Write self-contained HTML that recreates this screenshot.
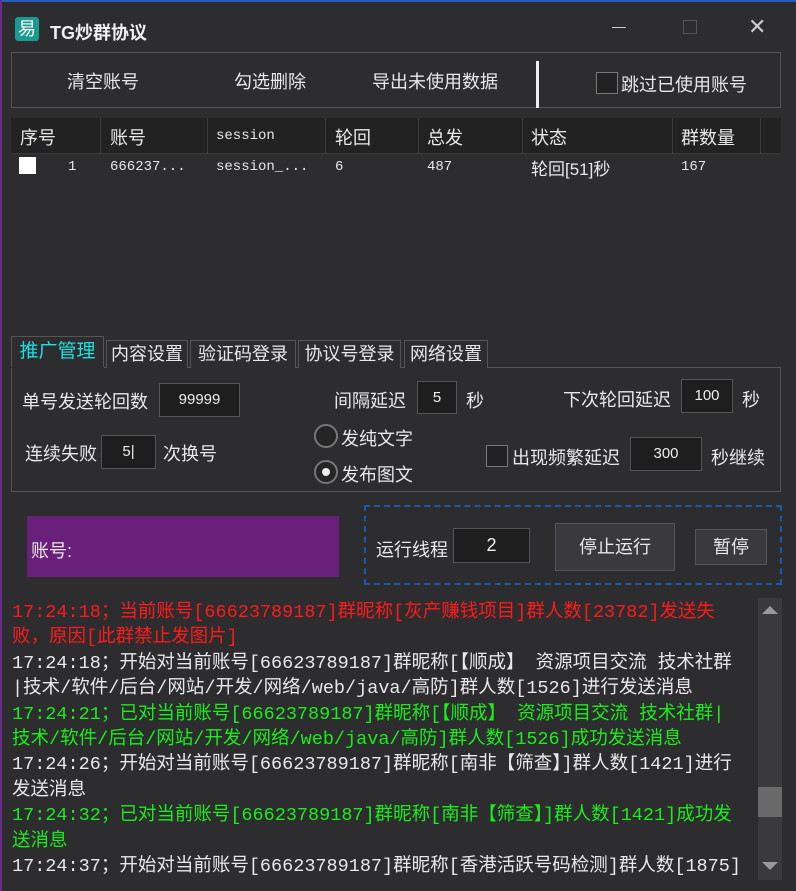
<!DOCTYPE html>
<html><head><meta charset="utf-8">
<style>
*{box-sizing:border-box;margin:0;padding:0}
body{width:796px;height:891px;background:#2d2d30;position:relative;overflow:hidden;font-family:"Liberation Sans","Noto Sans CJK SC",sans-serif;color:#e8e8e8}
.abs{position:absolute}
.frameT{left:0;top:0;width:796px;height:2px;background:#2a5ac8}
.frameL{left:0;top:0;width:2px;height:891px;background:#6a2a8a}
.title{left:50px;top:19px;font-size:18px;font-weight:bold;color:#f0f0f0}
.logo{left:15px;top:17px;width:24px;height:24px;background:#1a9a90;border-radius:3px;color:#fff;font-size:18px;line-height:24px;text-align:center}
.tb{left:11px;top:52px;width:770px;height:56px;border:1px solid #555}
.tbt{font-size:18px;top:68px}
.chk{width:22px;height:22px;border:1px solid #777;background:#222}
.th{left:11px;top:118px;width:770px;height:35px;background:#222}
.col{top:118px;height:35px;width:1px;background:#3a3a3a}
.hcell{top:124px;font-size:18px}
.mono{font-family:"Liberation Mono","Noto Sans CJK SC",monospace}
.rcell{top:155px;font-size:17px}
.tab{top:340px;height:28px;border:1px solid #555;border-bottom:none;font-size:18px;line-height:26px;text-align:center;background:#2d2d30;white-space:nowrap}
.panel{left:11px;top:367px;width:770px;height:125px;border:1px solid #555}
.lbl{font-size:18px;white-space:nowrap}
.inp{background:#1e1e1e;border:1px solid #555;font-size:15px;text-align:center;color:#eee}
.radio{width:24px;height:24px;border-radius:50%;border:2px solid #777;background:#252525}
.btn{background:#3a3a3e;border:1px solid #555;font-size:18px;text-align:center}
.log{left:12px;top:600px;width:746px;height:280px;font-size:18.5px;line-height:25.4px;white-space:nowrap;overflow:hidden}
.r{color:#ff1a1a}.g{color:#1aee1a}.w{color:#e8e8e8}
</style></head><body>
<div class="abs frameT"></div><div class="abs frameL"></div>
<div class="abs logo">易</div>
<div class="abs title">TG炒群协议</div>
<div class="abs" style="left:612px;top:27px;width:14px;height:1px;background:#ccc"></div>
<div class="abs" style="left:683px;top:20px;width:14px;height:14px;border:1px solid #555"></div>
<div class="abs" style="left:748px;top:15px;font-size:22px;color:#ccc;line-height:24px">✕</div>

<div class="abs tb"></div>
<div class="abs tbt" style="left:67px">清空账号</div>
<div class="abs tbt" style="left:234px">勾选删除</div>
<div class="abs tbt" style="left:372px">导出未使用数据</div>
<div class="abs" style="left:536px;top:61px;width:3px;height:47px;background:#eee"></div>
<div class="abs chk" style="left:596px;top:72px"></div>
<div class="abs tbt" style="left:621px;top:71px">跳过已使用账号</div>

<div class="abs th"></div>
<div class="abs col" style="left:100px"></div><div class="abs col" style="left:207px"></div><div class="abs col" style="left:325px"></div><div class="abs col" style="left:418px"></div><div class="abs col" style="left:522px"></div><div class="abs col" style="left:672px"></div><div class="abs col" style="left:760px"></div>
<div class="abs" style="left:11px;top:153px;width:770px;height:1px;background:#3a3a3a"></div>
<div class="abs hcell" style="left:20px">序号</div>
<div class="abs hcell" style="left:110px">账号</div>
<div class="abs hcell mono" style="left:216px;font-size:14px;top:128px">session</div>
<div class="abs hcell" style="left:335px">轮回</div>
<div class="abs hcell" style="left:427px">总发</div>
<div class="abs hcell" style="left:531px">状态</div>
<div class="abs hcell" style="left:681px">群数量</div>
<div class="abs" style="left:19px;top:157px;width:17px;height:17px;background:#fff"></div>
<div class="abs rcell mono" style="left:68px;font-size:14px;top:159px">1</div>
<div class="abs rcell mono" style="left:110px;font-size:14px;top:159px">666237...</div>
<div class="abs rcell mono" style="left:216px;font-size:14px;top:159px">session_...</div>
<div class="abs rcell mono" style="left:335px;font-size:14px;top:159px">6</div>
<div class="abs rcell mono" style="left:427px;font-size:14px;top:159px">487</div>
<div class="abs rcell" style="left:531px">轮回[51]秒</div>
<div class="abs rcell mono" style="left:681px;font-size:14px;top:159px">167</div>

<div class="abs panel"></div>
<div class="abs tab" style="left:11px;top:336px;height:32px;width:93px;color:#1ee0e0;font-size:19px;line-height:30px;border-bottom:1px solid #2d2d30">推广管理</div>
<div class="abs tab" style="left:106px;width:82px">内容设置</div>
<div class="abs tab" style="left:190px;width:106px">验证码登录</div>
<div class="abs tab" style="left:298px;width:103px">协议号登录</div>
<div class="abs tab" style="left:404px;width:84px">网络设置</div>

<div class="abs lbl" style="left:22px;top:388px">单号发送轮回数</div>
<div class="abs inp" style="left:159px;top:383px;width:81px;height:34px;line-height:32px">99999</div>
<div class="abs lbl" style="left:25px;top:440px">连续失败</div>
<div class="abs inp" style="left:101px;top:435px;width:55px;height:34px;line-height:32px">5|</div>
<div class="abs lbl" style="left:163px;top:440px">次换号</div>
<div class="abs lbl" style="left:334px;top:387px">间隔延迟</div>
<div class="abs inp" style="left:417px;top:381px;width:40px;height:33px;line-height:31px">5</div>
<div class="abs lbl" style="left:466px;top:387px">秒</div>
<div class="abs radio" style="left:314px;top:424px"></div>
<div class="abs lbl" style="left:341px;top:425px">发纯文字</div>
<div class="abs radio" style="left:314px;top:460px"><div style="position:absolute;left:6px;top:6px;width:8px;height:8px;border-radius:50%;background:#eee"></div></div>
<div class="abs lbl" style="left:341px;top:461px">发布图文</div>
<div class="abs lbl" style="left:563px;top:386px">下次轮回延迟</div>
<div class="abs inp" style="left:681px;top:379px;width:52px;height:34px;line-height:32px">100</div>
<div class="abs lbl" style="left:742px;top:386px">秒</div>
<div class="abs chk" style="left:486px;top:445px"></div>
<div class="abs lbl" style="left:512px;top:444px">出现频繁延迟</div>
<div class="abs inp" style="left:630px;top:437px;width:72px;height:34px;line-height:32px">300</div>
<div class="abs lbl" style="left:711px;top:444px">秒继续</div>

<div class="abs" style="left:27px;top:516px;width:312px;height:61px;background:#68207a"></div>
<div class="abs lbl" style="left:31px;top:537px">账号:</div>
<div class="abs" style="left:364px;top:505px;width:418px;height:80px;border:2px dashed #1a5aa8"></div>
<div class="abs lbl" style="left:376px;top:536px">运行线程</div>
<div class="abs inp" style="left:453px;top:528px;width:77px;height:35px;line-height:33px;font-size:18px">2</div>
<div class="abs btn" style="left:555px;top:523px;width:120px;height:48px;line-height:46px">停止运行</div>
<div class="abs btn" style="left:695px;top:529px;width:72px;height:36px;line-height:34px">暂停</div>

<div class="abs log mono">
<div class="r">17:24:18；当前账号[66623789187]群昵称[灰产赚钱项目]群人数[23782]发送失</div>
<div class="r">败，原因[此群禁止发图片]</div>
<div class="w">17:24:18；开始对当前账号[66623789187]群昵称[【顺成】 资源项目交流 技术社群</div>
<div class="w">|技术/软件/后台/网站/开发/网络/web/java/高防]群人数[1526]进行发送消息</div>
<div class="g">17:24:21；已对当前账号[66623789187]群昵称[【顺成】 资源项目交流 技术社群|</div>
<div class="g">技术/软件/后台/网站/开发/网络/web/java/高防]群人数[1526]成功发送消息</div>
<div class="w">17:24:26；开始对当前账号[66623789187]群昵称[南非【筛查】]群人数[1421]进行</div>
<div class="w">发送消息</div>
<div class="g">17:24:32；已对当前账号[66623789187]群昵称[南非【筛查】]群人数[1421]成功发</div>
<div class="g">送消息</div>
<div class="w">17:24:37；开始对当前账号[66623789187]群昵称[香港活跃号码检测]群人数[1875]</div>
</div>
<div class="abs" style="left:758px;top:598px;width:24px;height:282px;background:#3a3a3e"></div>
<div class="abs" style="left:762px;top:606px;width:0;height:0;border-left:8px solid transparent;border-right:8px solid transparent;border-bottom:8px solid #999"></div>
<div class="abs" style="left:758px;top:787px;width:24px;height:30px;background:#6a6a6a"></div>
<div class="abs" style="left:762px;top:862px;width:0;height:0;border-left:8px solid transparent;border-right:8px solid transparent;border-top:8px solid #999"></div>
</body></html>
